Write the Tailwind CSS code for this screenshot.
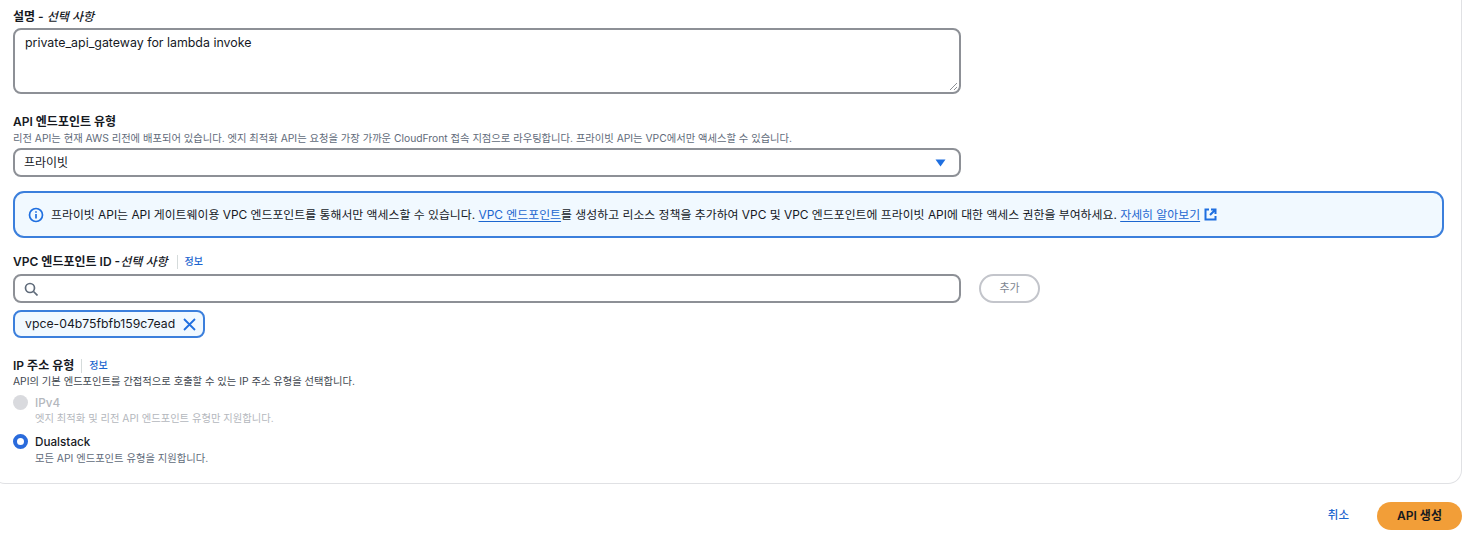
<!DOCTYPE html>
<html lang="ko">
<head>
<meta charset="utf-8">
<script src="https://cdn.jsdelivr.net/npm/@tailwindcss/browser@4"></script>
</head>
<body class="bg-white overflow-hidden font-['Inter','Noto_Sans_CJK_KR',sans-serif] text-[#16191f]">
<div class="w-[1476px] h-[544px] overflow-hidden">
  <section class="w-[1471px] -ml-[9px] h-[484px] border-x border-b border-[#e0e1e4] rounded-br-[14px] rounded-bl-[14px] pl-[21px] pt-[8px]">
    <div class="text-[12px] leading-[17px] font-semibold h-[20px]">설명 - <i class="font-medium">선택 사항</i></div>
    <div class="w-[948px] h-[66px] border-2 border-[#8d9096] rounded-[8px] relative px-[10px] pt-[4px] text-[12.400px] leading-[18px]">private_api_gateway for lambda invoke
      <svg class="absolute right-[1px] bottom-[1px]" width="9" height="9" viewBox="0 0 9 9"><path d="M1 8 8 1M5 8 8 5" stroke="#8d9096" fill="none"/></svg>
    </div>
    <div class="text-[12px] leading-[17px] font-semibold mt-[19px]">API 엔드포인트 유형</div>
    <div class="text-[10.300px] leading-[14px] text-[#5f6b7a] mt-[1px] h-[15px] whitespace-nowrap">리전 API는 현재 AWS 리전에 배포되어 있습니다. 엣지 최적화 API는 요청을 가장 가까운 CloudFront 접속 지점으로 라우팅합니다. 프라이빗 API는 VPC에서만 액세스할 수 있습니다.</div>
    <div class="w-[948px] h-[29px] border-2 border-[#8d9096] rounded-[8px] mt-[2px] pl-[9px] pr-[10px] flex items-center justify-between text-[12px]">
      <span>프라이빗</span>
      <svg class="mr-[3px]" width="11" height="8" viewBox="0 0 11 8"><path d="M.5.5h10L5.5 7.500z" fill="#1f6fe0"/></svg>
    </div>
    <div class="w-[1431px] h-[47px] mt-[14px] border-2 border-[#3b7fdc] rounded-[11px] bg-[#f1f9ff] pl-[13px] flex items-center gap-[7px] text-[11.900px]">
      <svg width="16" height="16" viewBox="0 0 16 16" fill="none" stroke="#1f6fe0" stroke-width="1.700"><circle cx="8" cy="8" r="6.500"/><path d="M8 7v4.500M8 4.200v1.500"/></svg>
      <span class="whitespace-nowrap">프라이빗 API는 API 게이트웨이용 VPC 엔드포인트를 통해서만 액세스할 수 있습니다. <a class="text-[#1c66cf] underline underline-offset-2">VPC 엔드포인트</a>를 생성하고 리소스 정책을 추가하여 VPC 및 VPC 엔드포인트에 프라이빗 API에 대한 액세스 권한을 부여하세요. <a class="text-[#1c66cf] underline underline-offset-2">자세히 알아보기</a></span>
      <svg class="-ml-[3px]" width="13" height="13" viewBox="0 0 13 13" fill="none" stroke="#1f6fe0" stroke-width="2"><path d="M5 1.500H1.500v10h10V8M7 1.500h4.500V6M11 2 6 7"/></svg>
    </div>
    <div class="flex items-center mt-[15px] h-[17px] text-[12px] font-semibold">VPC 엔드포인트 ID -<i class="font-medium">선택 사항</i><span class="w-px h-[14px] bg-[#d5dbdb] ml-[9px] mr-[7px]"></span><a class="text-[#1c66cf] text-[10px] font-medium">정보</a></div>
    <div class="flex items-center gap-[18px] mt-[4px]">
      <div class="w-[948px] h-[29px] border-2 border-[#8d9096] rounded-[8px] pl-[9px] flex items-center">
        <svg width="14" height="14" viewBox="0 0 14 14" fill="none" stroke="#5f6b7a" stroke-width="1.700"><circle cx="6" cy="6" r="4.500"/><path d="m9.500 9.500 4 4"/></svg>
      </div>
      <button class="w-[61px] h-[29px] border-2 border-[#c3c5cb] rounded-full text-[11px] text-[#7d8590]">추가</button>
    </div>
    <div class="w-[192px] h-[28px] mt-[7px] border-2 border-[#3b7fdc] rounded-[8px] bg-[#f1f9ff] pl-[10px] flex items-center gap-[8px] text-[12.250px] whitespace-nowrap">vpce-04b75fbfb159c7ead
      <svg width="13" height="13" viewBox="0 0 13 13" fill="none" stroke="#1f6fe0" stroke-width="1.800"><path d="m1 1 11 11M12 1 1 12"/></svg>
    </div>
    <div class="flex items-center mt-[19px] h-[17px] text-[12px] font-semibold">IP 주소 유형<span class="w-px h-[14px] bg-[#d5dbdb] ml-[7px] mr-[7px]"></span><a class="text-[#1c66cf] text-[10px] font-medium">정보</a></div>
    <div class="text-[10.300px] leading-[14px] text-[#414750] h-[14px]">API의 기본 엔드포인트를 간접적으로 호출할 수 있는 IP 주소 유형을 선택합니다.</div>
    <div class="flex gap-[7px] mt-[6px] h-[39px]">
      <span class="w-[15px] h-[15px] mt-[1px] rounded-full bg-[#d9dade]"></span>
      <div class="pt-[1px]"><div class="text-[11.700px] leading-[17px] text-[#b4b7bd] font-medium">IPv4</div><div class="text-[10.300px] leading-[14px] -mt-[1px] text-[#b4b7bd]">엣지 최적화 및 리전 API 엔드포인트 유형만 지원합니다.</div></div>
    </div>
    <div class="flex gap-[7px] h-[36px]">
      <span class="w-[15px] h-[15px] mt-[1px] rounded-full border-[4px] border-[#2a6bdc] bg-white"></span>
      <div class="pt-[1px]"><div class="text-[11.700px] leading-[17px] font-medium">Dualstack</div><div class="text-[10.300px] leading-[14px] text-[#5f6b7a]">모든 API 엔드포인트 유형을 지원합니다.</div></div>
    </div>
  </section>
  <div class="w-[1462px] flex justify-end items-center mt-[18px]">
    <a class="text-[#1c66cf] text-[11.500px] font-medium mr-[28px]">취소</a>
    <button class="w-[85px] h-[28px] rounded-full bg-[#f29e38] text-[12px] font-semibold">API 생성</button>
  </div>
</div>
</body>
</html>
